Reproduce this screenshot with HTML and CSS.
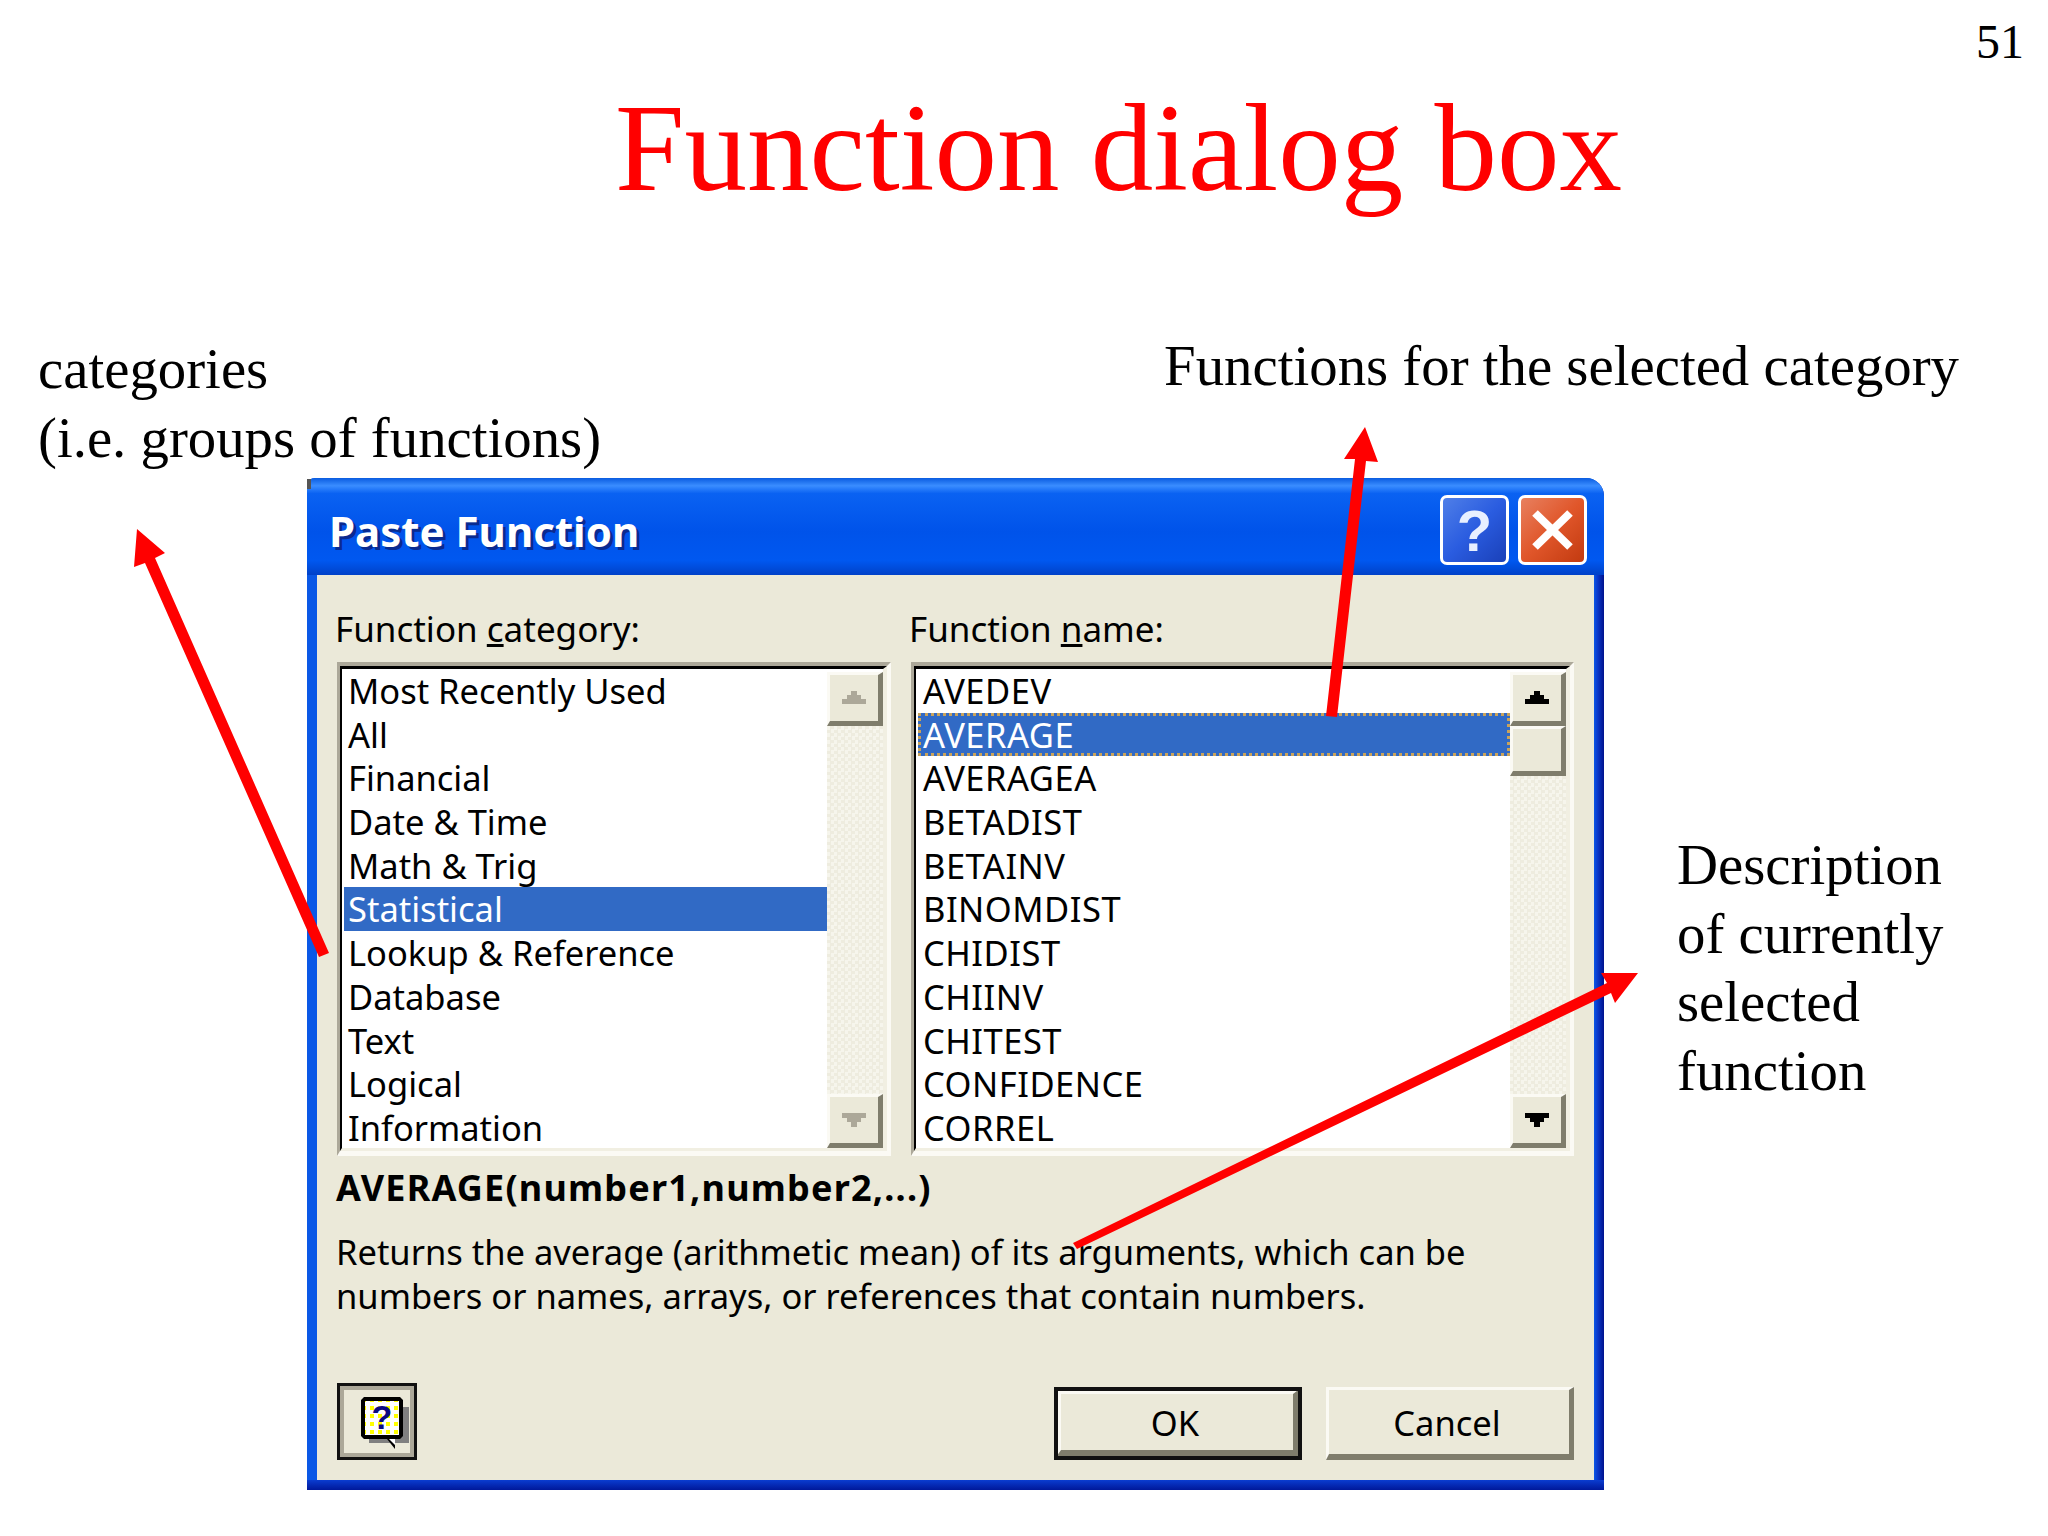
FILE: index.html
```html
<!DOCTYPE html>
<html lang="en">

<head>
  <meta charset="UTF-8">
  <title>Function dialog box</title>
  <link rel="stylesheet" href="styles.css">
</head>

<body>

  <div class="slide">
    <div class="page-num">51</div>
    <h1 class="slide-title">Function dialog box</h1>

    <div class="notes">
      <p class="note">categories<br>(i.e. groups of functions)</p>
      <p class="note note-right">Functions for the selected category</p>
    </div>

    <div class="main">
      <div class="dialog">
        <div class="titlebar">
          <span class="titlebar-text">Paste Function</span>
          <div class="window-btns">
            <span class="window-btn btn-help">?</span>
            <span class="window-btn btn-close">
              <svg width="63" height="64" viewBox="0 0 63 64">
                <path d="M14 15 L49 49 M49 15 L14 49" stroke="#fff" stroke-width="8" fill="none" />
              </svg>
            </span>
          </div>
        </div>

        <div class="dialog-body">
          <div class="lists">
            <div class="list-col">
              <div class="list-label">Function <u>c</u>ategory:</div>
              <div class="list-box">
                <div class="list-inner">
                  <ul class="rows">
                    <li>Most Recently Used</li>
                    <li>All</li>
                    <li>Financial</li>
                    <li>Date &amp; Time</li>
                    <li>Math &amp; Trig</li>
                    <li class="selected">Statistical</li>
                    <li>Lookup &amp; Reference</li>
                    <li>Database</li>
                    <li>Text</li>
                    <li>Logical</li>
                    <li>Information</li>
                  </ul>
                  <div class="scrollbar">
                    <div class="sb-btn">
                      <svg width="26" height="16" viewBox="0 0 26 16">
                        <path d="M10 1h6v4h4v4h5v5H1V9h5V5h4z" fill="#aca899" />
                      </svg>
                    </div>
                    <div class="sb-track"></div>
                    <div class="sb-btn">
                      <svg width="26" height="16" viewBox="0 0 26 16">
                        <path d="M1 1h24v5h-5v4h-4v5h-6v-5H6V6H1z" fill="#aca899" />
                      </svg>
                    </div>
                  </div>
                </div>
              </div>
            </div>

            <div class="list-col">
              <div class="list-label">Function <u>n</u>ame:</div>
              <div class="list-box">
                <div class="list-inner">
                  <ul class="rows rows-caps">
                    <li>AVEDEV</li>
                    <li class="selected focused">AVERAGE</li>
                    <li>AVERAGEA</li>
                    <li>BETADIST</li>
                    <li>BETAINV</li>
                    <li>BINOMDIST</li>
                    <li>CHIDIST</li>
                    <li>CHIINV</li>
                    <li>CHITEST</li>
                    <li>CONFIDENCE</li>
                    <li>CORREL</li>
                  </ul>
                  <div class="scrollbar">
                    <div class="sb-btn">
                      <svg width="26" height="16" viewBox="0 0 26 16">
                        <path d="M10 1h6v4h4v4h5v5H1V9h5V5h4z" fill="#000" />
                      </svg>
                    </div>
                    <div class="sb-btn sb-thumb"></div>
                    <div class="sb-track"></div>
                    <div class="sb-btn">
                      <svg width="26" height="16" viewBox="0 0 26 16">
                        <path d="M1 1h24v5h-5v4h-4v5h-6v-5H6V6H1z" fill="#000" />
                      </svg>
                    </div>
                  </div>
                </div>
              </div>
            </div>
          </div>

          <div class="formula">AVERAGE(number1,number2,...)</div>
          <p class="description">Returns the average (arithmetic mean) of its arguments, which can be<br>numbers or names, arrays, or references that contain numbers.</p>

          <div class="footer">
            <div class="help-btn">
              <svg width="48" height="54" viewBox="0 0 48 54">
                <defs>
                  <pattern id="dots" width="8" height="8" patternUnits="userSpaceOnUse">
                    <rect width="8" height="8" fill="#fff" />
                    <rect x="1" y="1" width="4" height="4" fill="#ffff00" />
                  </pattern>
                </defs>
                <path d="M8 10h40v36H8z" fill="#808080" />
                <path d="M3 0h36l3 3v36l-3 3H34v10l-8-10H3l-3-3V3z" fill="#000" />
                <rect x="4" y="4" width="34" height="34" fill="url(#dots)" />
                <path d="M28 42h6v6z" fill="#fff" />
                <text x="21" y="32" text-anchor="middle" class="help-mark">?</text>
              </svg>
            </div>
            <div class="actions">
              <div class="push-btn default"><span>OK</span></div>
              <div class="push-btn"><span>Cancel</span></div>
            </div>
          </div>
        </div>
      </div>

      <p class="note description-note">Description<br>of currently<br>selected<br>function</p>
    </div>

    <svg class="arrows" width="2048" height="1536" viewBox="0 0 2048 1536">
      <polygon points="319,957 145,563 134,567 137,529 165,553 155,558 329,953" />
      <polygon points="1326,716 1355,459 1344,459 1365,427 1378,462 1366,461 1337,717" />
      <polygon points="1073,1243 1607,983 1601,973 1638,973 1615,1003 1611,993 1077,1249" />
    </svg>
  </div>

</body>

</html>
```

FILE: styles.css
```css
body {
  margin: 0;
  background-color: white;
}

.slide {
  position: relative;
  width: 2048px;
  height: 1536px;
  overflow: hidden;
  font-family: "Liberation Serif", serif;
  color: black;
}

.page-num {
  height: 62px;
  padding-top: 14px;
  padding-right: 24px;
  box-sizing: border-box;
  font-size: 48px;
  line-height: 55px;
  text-align: right;
}

.slide-title {
  margin: 0 0 0 615px;
  height: 258px;
  font-size: 125px;
  font-weight: normal;
  line-height: 172px;
  color: #ff0000;
}

.notes {
  display: flex;
  justify-content: space-between;
  height: 158px;
  padding: 15px 89px 0 38px;
  box-sizing: border-box;
}

.note {
  margin: 0;
  font-size: 56.8px;
  line-height: 68.5px;
}

.note-right {
  margin-top: -3px;
}

.main {
  display: flex;
  margin-left: 307px;
}

.description-note {
  margin-left: 73px;
  margin-top: 353px;
}

/* dialog */
.dialog {
  position: relative;
  display: flex;
  flex-direction: column;
  width: 1297px;
  height: 1012px;
  box-sizing: border-box;
  border-radius: 8px 18px 0 0;
  background:
    linear-gradient(to top, #00189a 0, #0a3cd0 10px, transparent 10px),
    linear-gradient(to right, #0a58e6 0, #0a58e6 1287px, #0a3cd0 1290px, #00128c 100%);
  font-family: "Noto Sans", sans-serif;
}

.dialog::before {
  content: "";
  position: absolute;
  left: 0;
  top: 1px;
  width: 4px;
  height: 10px;
  background-color: #555;
}

.titlebar {
  display: flex;
  justify-content: space-between;
  align-items: center;
  height: 97px;
  padding: 0 17px 0 22px;
  box-sizing: border-box;
  border-radius: 8px 18px 0 0;
  background: linear-gradient(to bottom, #0a5ce0 0, #3a8dff 8%, #0a62f2 16%, #0053ea 55%, #0058f0 85%, #0041c8 100%);
}

.titlebar-text {
  padding-top: 8px;
  color: white;
  font-size: 42px;
  font-weight: bold;
  text-shadow: 3px 3px 0 #0a2a90;
}

.window-btns {
  display: flex;
  gap: 9px;
  margin-top: 7px;
}

.window-btn {
  display: flex;
  justify-content: center;
  align-items: center;
  width: 69px;
  height: 70px;
  box-sizing: border-box;
  border: 3px solid #fff;
  border-radius: 7px;
}

.btn-help {
  background: linear-gradient(135deg, #4f7fe8 0, #2a5ce0 50%, #1a40b8 100%);
  color: #e8f0ff;
  font-family: "Liberation Sans", sans-serif;
  font-size: 58px;
  font-weight: bold;
}

.btn-close {
  background: linear-gradient(135deg, #e8805f 0, #e0562a 50%, #c23a10 100%);
}

.dialog-body {
  display: flex;
  flex-direction: column;
  flex: 1;
  margin: 0 10px 10px;
  padding: 0 20px 20px;
  background-color: #ebe9d9;
  font-size: 34.5px;
  color: black;
}

.lists {
  display: grid;
  grid-template-columns: 554px 663px;
  gap: 20px;
}

.list-label {
  height: 87px;
  padding-top: 28px;
  margin-left: -2px;
  box-sizing: border-box;
  font-size: 35px;
  line-height: 52px;
}

.list-box {
  height: 494px;
  box-sizing: border-box;
  border-style: solid;
  border-width: 4px 4px 5px 3px;
  border-color: #aca899 #fbfaf4 #fbfaf4 #aca899;
}

.list-inner {
  display: flex;
  height: 100%;
  box-sizing: border-box;
  border-style: solid;
  border-width: 3px 4px 3px 2px;
  border-color: black #f1efe2 #f1efe2 black;
  background-color: white;
}

.rows {
  flex: 1;
  list-style: none;
  margin: 0;
  padding: 0;
}

.rows li {
  height: 43.7px;
  margin-left: 2px;
  padding-left: 4px;
  line-height: 43px;
  box-sizing: border-box;
  white-space: nowrap;
}

.rows-caps li {
  padding-left: 5px;
  letter-spacing: 0.5px;
}

.rows .selected {
  background-color: #316ac5;
  color: white;
}

.rows .focused {
  outline: 3px dotted #c9a35a;
  outline-offset: -3px;
}

.scrollbar {
  display: flex;
  flex-direction: column;
  width: 56px;
  padding-top: 3px;
  box-sizing: content-box;
}

.sb-btn {
  display: flex;
  justify-content: center;
  align-items: center;
  height: 54px;
  flex: none;
  box-sizing: border-box;
  border-style: solid;
  border-width: 3px 5px 5px 3px;
  border-color: #fbfaf4 #7f7d6c #7f7d6c #fbfaf4;
  background-color: #ebe9d9;
}

.sb-thumb {
  height: 50px;
}

.sb-track {
  flex: 1;
  background-color: #f6f5ec;
  background-image: conic-gradient(#eeecdf 25%, transparent 0 50%, #eeecdf 0 75%, transparent 0);
  background-size: 7px 7px;
}

.formula {
  margin-top: 4px;
  margin-left: -1px;
  height: 62px;
  font-size: 36px;
  line-height: 56px;
  font-weight: bold;
  letter-spacing: 1.2px;
}

.description {
  margin: 8px 0 0 -1px;
  line-height: 44px;
}

.footer {
  display: flex;
  justify-content: space-between;
  align-items: flex-end;
  flex: 1;
}

.help-btn {
  display: flex;
  align-items: flex-start;
  width: 80px;
  height: 77px;
  padding: 11px 0 0 21px;
  box-sizing: border-box;
  border: 3px solid #111;
  outline: 4px solid #aca899;
  outline-offset: -7px;
}

.help-mark {
  font-family: "Liberation Sans", sans-serif;
  font-size: 34px;
  font-weight: bold;
  fill: #0a0a80;
}

.actions {
  display: flex;
  gap: 24px;
}

.push-btn {
  display: flex;
  justify-content: center;
  align-items: center;
  width: 248px;
  height: 73px;
  padding-right: 4px;
  box-sizing: border-box;
  border-style: solid;
  border-width: 3px 5px 6px 3px;
  border-color: #fbfaf4 #7f7d6c #7f7d6c #fbfaf4;
  background-color: #ebe9d9;
}

.push-btn.default {
  border-width: 7px 9px 10px 7px;
  outline: 4px solid #111;
  outline-offset: -4px;
}

.arrows {
  position: absolute;
  left: 0;
  top: 0;
  fill: #ff0000;
}
```
